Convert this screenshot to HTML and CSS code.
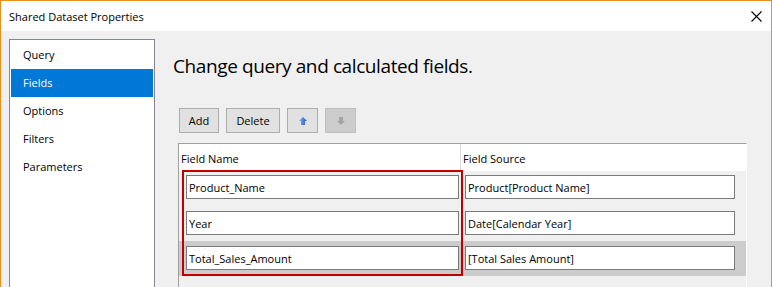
FILE: index.html
```html
<!DOCTYPE html>
<html>
<head>
<meta charset="utf-8">
<title>Shared Dataset Properties</title>
<link rel="stylesheet" href="styles.css">
</head>
<body>
<div class="window">
  <div class="titlebar">
    <span class="title">Shared Dataset Properties</span>
    <svg class="close" width="11" height="11" viewBox="0 0 11 11"><path d="M0.5 0.5 L10.5 10.5 M10.5 0.5 L0.5 10.5" stroke="#000" stroke-width="1.1" fill="none"/></svg>
  </div>
  <div class="content">
    <ul class="nav">
      <li class="nav-item">Query</li>
      <li class="nav-item selected">Fields</li>
      <li class="nav-item">Options</li>
      <li class="nav-item">Filters</li>
      <li class="nav-item">Parameters</li>
    </ul>
    <div class="main">
      <h1 class="heading">Change query and calculated fields.</h1>
      <div class="toolbar">
        <button class="btn btn-add">Add</button>
        <button class="btn btn-delete">Delete</button>
        <button class="btn btn-icon">
          <svg width="8" height="8" viewBox="0 0 8 8"><defs><linearGradient id="gu" x1="0" y1="0" x2="1" y2="0"><stop offset="0" stop-color="#7fb2ff"/><stop offset="1" stop-color="#1a52c8"/></linearGradient></defs><polygon points="4,0 8,4 6,4 6,8 2,8 2,4 0,4" fill="url(#gu)"/></svg>
        </button>
        <button class="btn btn-icon disabled">
          <svg width="8" height="8" viewBox="0 0 8 8"><polygon points="2,0 6,0 6,4 8,4 4,8 0,4 2,4" fill="#a3a3a3"/></svg>
        </button>
      </div>
      <div class="grid">
        <div class="grid-header">
          <div class="hcell col1">Field Name</div>
          <div class="hcell col2">Field Source</div>
        </div>
        <div class="grid-row">
          <div class="cell col1"><input class="field" value="Product_Name"></div>
          <div class="cell col2"><input class="field" value="Product[Product Name]"></div>
        </div>
        <div class="grid-row">
          <div class="cell col1"><input class="field" value="Year"></div>
          <div class="cell col2"><input class="field" value="Date[Calendar Year]"></div>
        </div>
        <div class="grid-row selected">
          <div class="cell col1"><input class="field" value="Total_Sales_Amount"></div>
          <div class="cell col2"><input class="field" value="[Total Sales Amount]"></div>
        </div>
        <div class="highlight"></div>
      </div>
    </div>
  </div>
</div>
</body>
</html>
```
FILE: styles.css
```css
* { box-sizing: border-box; }
html, body { margin: 0; padding: 0; }
body {
  font-family: "Open Sans", "Noto Sans", sans-serif;
  font-size: 11px;
  color: #000;
  background: #f0f0f0;
}
.window {
  width: 772px;
  height: 287px;
  border: 1px solid #e8911c;
  border-bottom: none;
  background: #f0f0f0;
  display: flex;
  flex-direction: column;
  overflow: hidden;
}
.titlebar {
  height: 30px;
  flex: none;
  background: #fff;
  display: flex;
  align-items: center;
  padding-left: 8px;
  padding-right: 9px;
}
.title { flex: 1; padding-top: 1px; }
.close { display: block; margin-top: 0px; }
.content {
  flex: 1;
  display: flex;
  padding-top: 8px;
  min-height: 0;
}
.nav {
  list-style: none;
  margin: 0 0 0 8px;
  padding: 1px;
  width: 146px;
  flex: none;
  background: #fff;
  border: 1px solid #828790;
  border-bottom: none;
}
.nav-item {
  height: 28px;
  line-height: 28px;
  padding-left: 12px;
}
.nav-item.selected {
  background: #0078d7;
  color: #fff;
}
.main {
  flex: 1;
  display: flex;
  flex-direction: column;
  padding-left: 18px;
  min-width: 0;
}
.heading {
  margin: 15px 0 0 0;
  font-weight: normal;
  font-size: 19px;
  letter-spacing: -0.4px;
  line-height: 24px;
  height: 24px;
  color: #000;
}
.toolbar {
  display: flex;
  gap: 7px;
  margin: 30px 0 0 6px;
}
.btn {
  height: 25px;
  border: 1px solid #adadad;
  background: #e1e1e1;
  font-family: inherit;
  font-size: 11px;
  color: #000;
  padding: 0;
  display: flex;
  align-items: center;
  justify-content: center;
}
.btn-add { width: 40px; }
.btn-delete { width: 54px; }
.btn-icon { width: 31px; }
.btn-icon svg { display: block; }
.btn.disabled { background: #cccccc; border-color: #bfbfbf; }
.grid {
  position: relative;
  margin: 10px 0 0 5px;
  width: 569px;
  flex: 1;
  border-top: 1px solid #a0a0a0;
  border-left: 1px solid #a0a0a0;
  border-right: 1px solid #ffffff;
  background: #f0f0f0;
}
.grid-header {
  display: flex;
  height: 27px;
  background: #fff;
}
.hcell {
  display: flex;
  align-items: center;
  padding-top: 1px;
}
.hcell.col1 { width: 282px; padding-left: 2px; border-right: 1px solid #dcdcdc; }
.hcell.col2 { flex: 1; padding-left: 2px; }
.grid-row {
  display: flex;
  height: 35px;
  padding-top: 4px;
}
.grid-row + .grid-row { padding-top: 5px; }
.grid-row.selected { background: #cccccc; }
.cell.col1 { width: 283px; padding-left: 7px; }
.cell.col2 { flex: 1; padding-left: 3px; }
.field {
  display: block;
  height: 24px;
  border: 1px solid #7a7a7a;
  background: #fff;
  font-family: inherit;
  font-size: 11px;
  color: #000;
  padding: 0 0 0 2px;
  margin: 0;
  outline: none;
}
.cell.col1 .field { width: 273px; }
.cell.col2 .field { width: 270px; }
.highlight {
  position: absolute;
  left: 3px;
  top: 26px;
  width: 281px;
  height: 106px;
  border: 2px solid #c00000;
  pointer-events: none;
}
```
